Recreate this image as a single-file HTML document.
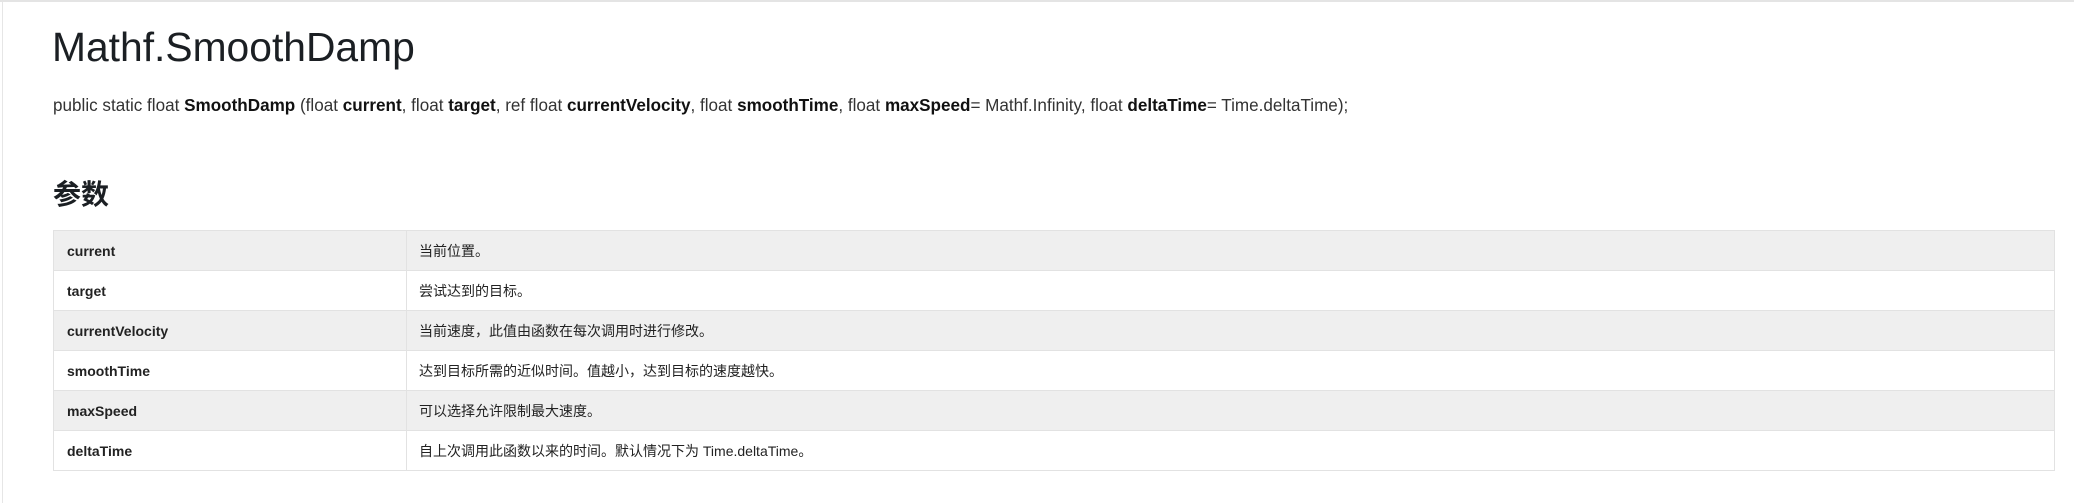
<!DOCTYPE html>
<html><head><meta charset="utf-8"><style>
html,body{margin:0;padding:0;background:#fff;width:2074px;height:503px;overflow:hidden;font-family:"Liberation Sans","Noto Sans CJK SC",sans-serif;color:#222;}
.top{position:absolute;left:0;top:0;width:2074px;height:2px;background:#e4e4e4}
.left{position:absolute;left:2px;top:2px;width:1px;height:501px;background:#e6e6e6}
h1{position:absolute;left:52px;top:22px;margin:0;font-size:40.8px;font-weight:normal;color:#1b1f23;line-height:50px;white-space:nowrap}
.sig{position:absolute;left:53px;top:96px;font-size:17.1px;line-height:20px;color:#333;white-space:nowrap}
.sig b{color:#111;font-weight:bold}
h2{position:absolute;left:53px;top:178px;margin:0;font-size:28px;line-height:34px;font-weight:bold;color:#1b1f23;font-family:"Liberation Sans","Noto Sans CJK SC",sans-serif}
table{position:absolute;left:53px;top:230px;width:2002px;border-collapse:collapse;border:1px solid #e2e2e2}
td{border:1px solid #e2e2e2;font-size:14px;padding:0 12px;height:39px;color:#222}
td:first-child{width:327px;font-weight:bold;color:#222;padding-left:13px}
tr:nth-child(odd) td{background:#efefef}
tr:nth-child(even) td{background:#fff}
</style></head><body>
<div class="top"></div><div class="left"></div>
<h1>Mathf.SmoothDamp</h1>
<div class="sig">public static float <b>SmoothDamp</b> (float <b>current</b>, float <b>target</b>, ref float <b>currentVelocity</b>, float <b>smoothTime</b>, float <b>maxSpeed</b>= Mathf.Infinity, float <b>deltaTime</b>= Time.deltaTime);</div>
<h2>参数</h2>
<table>
<tr><td>current</td><td>当前位置。</td></tr>
<tr><td>target</td><td>尝试达到的目标。</td></tr>
<tr><td>currentVelocity</td><td>当前速度，此值由函数在每次调用时进行修改。</td></tr>
<tr><td>smoothTime</td><td>达到目标所需的近似时间。值越小，达到目标的速度越快。</td></tr>
<tr><td>maxSpeed</td><td>可以选择允许限制最大速度。</td></tr>
<tr><td>deltaTime</td><td>自上次调用此函数以来的时间。默认情况下为 Time.deltaTime。</td></tr>
</table>
</body></html>
